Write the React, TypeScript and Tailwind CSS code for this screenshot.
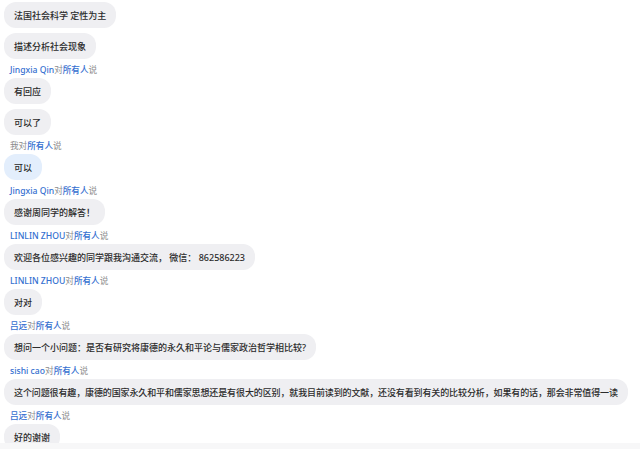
import React from "react";

type Item =
  | { kind: "bubble"; text: string; mine?: boolean; tight?: boolean }
  | { kind: "label"; name?: string };

const items: Item[] = [
  { kind: "bubble", text: "法国社会科学 定性为主" },
  { kind: "bubble", text: "描述分析社会现象" },
  { kind: "label", name: "Jingxia Qin" },
  { kind: "bubble", text: "有回应" },
  { kind: "bubble", text: "可以了" },
  { kind: "label" },
  { kind: "bubble", text: "可以", mine: true },
  { kind: "label", name: "Jingxia Qin" },
  { kind: "bubble", text: "感谢周同学的解答！" },
  { kind: "label", name: "LINLIN ZHOU" },
  { kind: "bubble", text: "欢迎各位感兴趣的同学跟我沟通交流， 微信： 862586223" },
  { kind: "label", name: "LINLIN ZHOU" },
  { kind: "bubble", text: "对对" },
  { kind: "label", name: "吕远" },
  { kind: "bubble", text: "想问一个小问题：是否有研究将康德的永久和平论与儒家政治哲学相比较?" },
  { kind: "label", name: "sishi cao" },
  {
    kind: "bubble",
    tight: true,
    text: "这个问题很有趣，康德的国家永久和平和儒家思想还是有很大的区别，就我目前读到的文献，还没有看到有关的比较分析，如果有的话，那会非常值得一读",
  },
  { kind: "label", name: "吕远" },
  { kind: "bubble", text: "好的谢谢" },
];

const font = { fontFamily: '"Noto Sans", "Noto Sans CJK SC", sans-serif' };

export default function App() {
  return (
    <div
      className="relative w-[640px] h-[449px] overflow-hidden bg-white"
      style={font}
    >
      <div className="flex flex-col items-start pt-[2px] pl-[4px]">
        {items.map((it, i) =>
          it.kind === "bubble" ? (
            <div
              key={i}
              className={`h-[26px] mb-[5px] px-[10px] flex items-center rounded-[12px] text-[9px] font-medium leading-none whitespace-nowrap text-[#2b2b2b] ${
                it.mine ? "bg-[#e3eefc]" : "bg-[#efeff2]"
              } ${it.tight ? "tracking-[-0.12px]" : ""}`}
            >
              {it.text}
            </div>
          ) : (
            <div
              key={i}
              className="h-[14px] pl-[6px] pt-[1px] flex items-start text-[8.6px] leading-[11px] whitespace-nowrap"
            >
              {it.name ? (
                <span className="text-[#356fd0] font-medium">{it.name}</span>
              ) : (
                <span className="text-[#8c8c8c]">我</span>
              )}
              <span className="text-[#8c8c8c]">对</span>
              <span className="text-[#356fd0] font-medium">所有人</span>
              <span className="text-[#8c8c8c]">说</span>
            </div>
          )
        )}
      </div>
      <div className="absolute left-0 right-0 bottom-0 h-[6px] bg-[#f7f7f8]" />
    </div>
  );
}
